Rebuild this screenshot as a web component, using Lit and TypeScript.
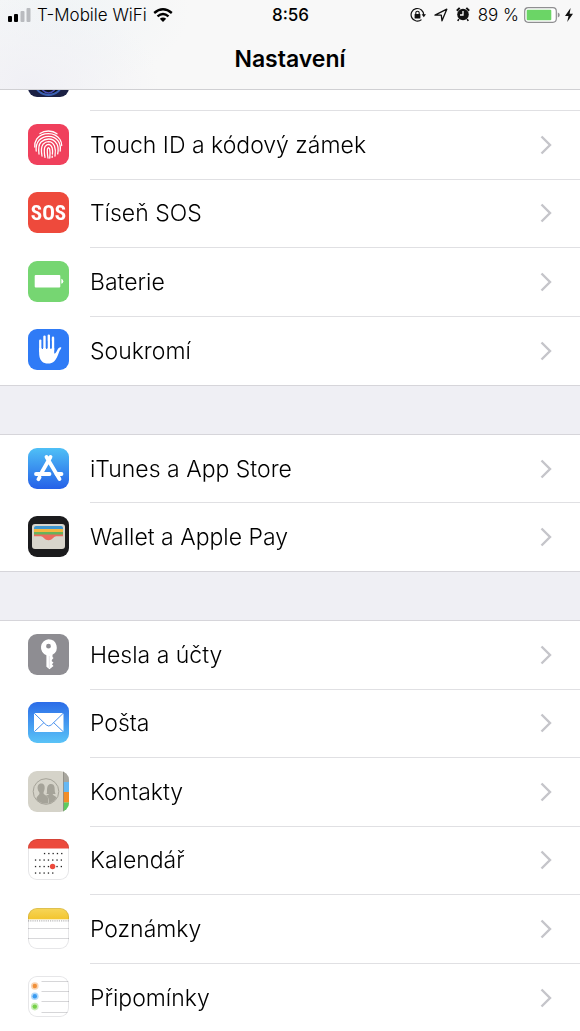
import { LitElement, html, css, svg, TemplateResult } from "lit";
import { customElement } from "lit/decorators.js";
import { unsafeCSS } from "lit";

interface Item {
  label: string;
  icon: TemplateResult;
}

const fan = (n: number, f: (i: number) => TemplateResult) =>
  Array.from({ length: n }, (_, i) => f(i));

// Every icon is drawn in a 41 x 41 box; the tile clips the corners.
const faceIcon = svg`
  <rect width="41" height="41" fill="#1b2044" />
  <ellipse cx="20.5" cy="28" rx="13" ry="11" fill="#10131f" stroke="#3a5fb0" stroke-width="2" />
  <ellipse cx="20.5" cy="28" rx="8" ry="9" fill="none" stroke="#4a4fb8" stroke-width="1.5" />`;

const touchIcon = svg`
  <rect width="41" height="41" fill="#f0405c" />
  <g fill="none" stroke="#fff" stroke-width="1.3" stroke-linecap="round">
    <path d="M12 9.500Q15.500 7 20.500 7Q25.500 7 29 9.800" />
    <path d="M6.800 23Q6.300 18.500 8.800 14.800Q13 9.600 20.500 9.600Q28 9.600 32 15.500Q33.800 18.500 33.700 21.500" />
    <path d="M8.200 27Q7.500 20.500 11 16.300Q15 12.300 20.500 12.300Q27 12.300 30.500 17.300Q33 21.500 32.200 27" />
    <path d="M11 30Q9.800 21.500 13 18Q16.500 15 20.500 15Q26 15 28.800 19.800Q31 24 29.700 29.800" />
    <path d="M14 32Q12.500 23.500 15 20.300Q17.500 17.700 20.500 17.700Q24.500 17.800 26.500 22Q28 26 27 32" />
    <path d="M17 33.300Q15.500 25 17.200 22.300Q18.800 20.400 20.500 20.400Q23 20.600 24.200 24Q25 27.500 24.400 30" />
    <path d="M20 34Q18.800 27 19.600 24.500Q20.800 22.800 21.700 25Q22.400 29 21.800 34M24.300 32.200L24.100 33.400" />
  </g>`;

const sosIcon = svg`
  <rect width="41" height="41" fill="#ee4a3c" />
  <text class="sos" x="20.500" y="27.800" text-anchor="middle">SOS</text>`;

const batteryIcon = svg`
  <rect width="41" height="41" fill="#76d672" />
  <rect x="6.700" y="14" width="25.600" height="12.600" rx="1" fill="#fff" />
  <path d="M33.300 17.800Q35.300 18.300 35.300 20.300T33.300 22.800Z" fill="#fff" />`;

const handIcon = svg`
  <rect width="41" height="41" fill="#2f7bf6" />
  <g stroke="#fff" stroke-width="2.400" stroke-linecap="round" fill="none">
    <path d="M12.300 22V11.800M16.500 20V7.600M20.800 20V6.600M25 21V8.800" />
  </g>
  <path d="M11.100 19H26.200V24.500C27.700 24.800 28.500 22.500 29.600 20.500C30.800 18.300 33 17.900 33.300 18.800C33.300 19.800 31.900 20.700 31 23.300C29.600 27.500 28.300 30 26.300 32.300C23.500 35.200 17 35.500 14 32.500C11.500 30 11.100 27 11.100 23Z" fill="#fff" />
  <path d="M14.400 12V20M18.700 12V20M22.900 12V20" stroke="#2f7bf6" stroke-width="1.200" />`;

const storeIcon = svg`
  <defs>
    <linearGradient id="store" x2="0" y2="1">
      <stop stop-color="#4fc0f6" /><stop offset="1" stop-color="#2560e8" />
    </linearGradient>
  </defs>
  <rect width="41" height="41" fill="url(#store)" />
  <g stroke="#fff" stroke-width="3.800" stroke-linecap="round" fill="none">
    <path d="M22.500 9L13.800 24.300M18.500 9L31.500 31M11.600 29.300L10.400 31.200" />
    <path d="M8 26H21.500M28.500 26H33.500" />
  </g>`;

const walletIcon = svg`
  <rect width="41" height="41" fill="#1b1b1d" />
  <rect x="4" y="8" width="33" height="25" rx="3" fill="#d8d5cc" />
  <rect x="6" y="10" width="29" height="9" rx="2" fill="#3f97cf" />
  <path d="M6 13H35V20H6Z" fill="#f4b63f" />
  <path d="M6 16H35V21H6Z" fill="#67b35c" />
  <path d="M6 18.500H35V21H6Z" fill="#ec6b5d" />
  <path d="M5 20.300H36V30Q36 32 34 32H7Q5 32 5 30Z" fill="#d8d5cc" />
  <path d="M12.500 20H28.500C25.500 20.300 24.500 24.300 20.500 24.300S15.500 20.300 12.500 20Z" fill="#ec6b5d" />`;

const keyIcon = svg`
  <rect width="41" height="41" fill="#8e8d92" />
  <path fill-rule="evenodd" fill="#fff" d="M20.500 5.300A8.200 8.200 0 0 1 24.500 20.700V23L25.500 24L23.800 26V27.300L25.500 28.600L24 30.200L25.500 32L21.500 35.300L18.400 32.800V21.200A8.200 8.200 0 0 1 20.500 5.300ZM20.500 9.800A2.400 2.400 0 1 0 20.500 14.600A2.400 2.400 0 1 0 20.500 9.800Z" />
  <path d="M21.300 22V34" stroke="#d5d4d8" stroke-width=".600" />`;

const mailIcon = svg`
  <defs>
    <linearGradient id="mail" x2="0" y2="1">
      <stop stop-color="#2b6ce8" /><stop offset="1" stop-color="#5ac3f7" />
    </linearGradient>
  </defs>
  <rect width="41" height="41" fill="url(#mail)" />
  <rect x="6" y="11" width="29.500" height="19" rx="1.500" fill="#fff" />
  <g fill="none" stroke="#4b92ee" stroke-width="1">
    <path d="M6.500 11.500L18.300 23Q20.700 25 23.200 23L35 11.500" />
    <path d="M6.500 29.500L16 20.500M35 29.500L25.500 20.500" />
  </g>`;

const contactsIcon = svg`
  <rect width="41" height="41" fill="#d5d3c9" />
  <rect x="35" width="6" height="11" fill="#a8a69e" />
  <rect x="35" y="11" width="6" height="10" fill="#66b8f4" />
  <rect x="35" y="21" width="6" height="10.500" fill="#f38d27" />
  <rect x="35" y="31.500" width="6" height="9.500" fill="#5ccb5f" />
  <path d="M35.500 0V41" stroke="#8d8b84" stroke-width=".800" />
  <circle cx="18" cy="20.500" r="12.800" fill="none" stroke="#a5a399" stroke-width="1" />
  <path fill="#a5a399" d="M13.200 12.500C16.300 12.500 17 15 16.600 18C16.300 20 15.500 20.700 15.500 22.200C15.500 24 19.500 24.200 20.300 27.500V32Q14 34 8.500 28.500C8 25.500 11.500 24.300 11.500 22.200C11.500 20.700 10 20.300 9.700 18C9.300 15 10.200 12.500 13.200 12.500Z" />
  <path fill="#a5a399" d="M23 13C26.500 13 26.800 16.500 26.700 19C26.600 21 27.500 22 27.500 23H24.700C24.700 24.500 27.500 24.700 28.500 26.500Q25.500 31.500 20.800 32.300C21.500 28 20 25.500 17.700 24.300C19.500 24.300 20.800 24 21 23H18.300C19.300 22 18.800 20.500 19 18.500C19.200 15.500 20 13 23 13Z" />`;

const dotRows: [number, number, number][] = [
  [14.5, 16.5, 5],
  [21, 7.5, 7],
  [27.5, 7.5, 7],
  [34, 7.5, 5],
];
const calendarIcon = svg`
  <rect width="41" height="41" fill="#fff" />
  <rect width="41" height="9.500" fill="#ec4a3c" />
  <g fill="#222">
    ${dotRows.map(([y, x, n]) =>
      fan(n, (i) => svg`<rect x=${x + i * 4.3 - 0.6} y=${y - 0.6} width="1.300" height="1.300" />`)
    )}
  </g>
  <circle cx="24.600" cy="27.500" r="2.700" fill="#ec4a3c" />`;

const notesIcon = svg`
  <defs>
    <linearGradient id="notes" x2="0" y2="1">
      <stop stop-color="#f7d65a" /><stop offset="1" stop-color="#f2c52f" />
    </linearGradient>
  </defs>
  <rect width="41" height="41" fill="#fff" />
  <rect width="41" height="11.300" fill="url(#notes)" />
  <path d="M0 12.800H41" stroke="#b8b8b8" stroke-width="1.200" stroke-dasharray="1.200 1" />
  <path d="M0 20.500H41M0 30.500H41" stroke="#d8d8da" stroke-width="1" />`;

const remindersIcon = svg`
  <rect width="41" height="41" fill="#fff" />
  <path d="M13.500 5.500H41M13.500 15.500H41M13.500 25.500H41M13.500 36.500H41" stroke="#d6d6d8" stroke-width="1" />
  ${["#f0903a", "#3a9bf0", "#76d047"].map(
    (c, i) => svg`
      <circle cx="6.800" cy=${10 + i * 10.3} r="3.800" fill=${c} opacity=".400" />
      <circle cx="6.800" cy=${10 + i * 10.3} r="2.200" fill=${c} />`
  )}`;

const groups: { name: string; items: Item[] }[] = [
  {
    name: "five",
    items: [
      { label: "Siri a hledání", icon: faceIcon },
      { label: "Touch ID a kódový zámek", icon: touchIcon },
      { label: "Tíseň SOS", icon: sosIcon },
      { label: "Baterie", icon: batteryIcon },
      { label: "Soukromí", icon: handIcon },
    ],
  },
  {
    name: "two",
    items: [
      { label: "iTunes a App Store", icon: storeIcon },
      { label: "Wallet a Apple Pay", icon: walletIcon },
    ],
  },
  {
    name: "six",
    items: [
      { label: "Hesla a účty", icon: keyIcon },
      { label: "Pošta", icon: mailIcon },
      { label: "Kontakty", icon: contactsIcon },
      { label: "Kalendář", icon: calendarIcon },
      { label: "Poznámky", icon: notesIcon },
      { label: "Připomínky", icon: remindersIcon },
    ],
  },
];
const outlined = new Set(["Kalendář", "Poznámky", "Připomínky"]);

const fontStack = unsafeCSS(`Inter, Roboto, "Liberation Sans", sans-serif`);

@customElement("status-bar")
class StatusBar extends LitElement {
  static styles = css`
    :host {
      display: grid;
      grid-template-columns: 1fr auto 1fr;
      align-items: center;
      height: 29px;
      padding: 0 7px 0 8px;
      font: 300 17px/20px ${fontStack};
      color: #000;
    }
    svg { display: block; flex: none; }
    .left { display: flex; align-items: center; gap: 6px; }
    .time { font-weight: 500; }
    .right { display: flex; align-items: center; justify-content: flex-end; gap: 5px; }
    .glyphs { display: flex; align-items: center; gap: 8px; margin-right: 3px; }
  `;

  render() {
    return html`
      <div class="left">
        <svg width="23" height="14" viewBox="0 0 23 14" aria-hidden="true">
          <rect x="0" y="8" width="4" height="6" rx="1" fill="#000" />
          <rect x="6" y="6" width="4" height="8" rx="1" fill="#000" />
          <rect x="12.500" y="3" width="4" height="11" rx="1" fill="#b9bbbf" />
          <rect x="18.500" y="0" width="4" height="14" rx="1" fill="#b9bbbf" />
        </svg>
        <span>T-Mobile WiFi</span>
        <svg width="20" height="14" viewBox="0 0 20 14" aria-hidden="true">
          <g fill="none" stroke="#000" stroke-width="2.400">
            <path d="M1.200 5Q10-2.500 18.800 5" />
            <path d="M4.500 8.400Q10 3.700 15.500 8.400" />
          </g>
          <path d="M10 14L6.800 10.800Q10 8 13.200 10.800Z" fill="#000" />
        </svg>
      </div>
      <span class="time">8:56</span>
      <div class="right">
        <div class="glyphs">
          <svg width="16" height="16" viewBox="0 0 16 16" aria-hidden="true">
            <path d="M13.700 8A6.300 6.300 0 1 0 11.500 12.600" fill="none" stroke="#111" stroke-width="1.200" />
            <path d="M11.600 7.300H16L13.800 10.300Z" fill="#111" />
            <rect x="4.600" y="7" width="5.800" height="4.400" rx=".500" fill="#111" />
            <path d="M5.800 7V5.800Q5.800 4.200 7.500 4.200T9.200 5.800V7" fill="none" stroke="#111" stroke-width="1.100" />
          </svg>
          <svg width="14" height="14" viewBox="0 0 14 14" aria-hidden="true">
            <path d="M1 7.200L12.800 1.200L8 12.800L7.300 7.200Z" fill="none" stroke="#111" stroke-width="1.300" stroke-linejoin="round" />
          </svg>
          <svg width="14" height="15" viewBox="0 0 14 15" aria-hidden="true">
            <circle cx="7" cy="7.500" r="5.800" fill="#111" />
            <path d="M.800 3.700L3.700.900M13.200 3.700L10.300.900" stroke="#111" stroke-width="2" />
            <path d="M2.800 12L1.800 14M11.200 12L12.200 14" stroke="#111" stroke-width="1.600" />
            <path d="M7 4V8H4" fill="none" stroke="#fff" stroke-width="1.300" />
          </svg>
        </div>
        <span>89 %</span>
        <svg width="36" height="16" viewBox="0 0 36 16" aria-label="Baterie 89 %">
          <rect x=".700" y=".700" width="31.600" height="14.600" rx="3.500" fill="#fff" stroke="#8f8f91" stroke-width="1.200" />
          <rect x="2.700" y="2.700" width="24.600" height="10.600" rx="1" fill="#6bd566" />
          <path d="M33.800 5.500Q35.800 6.200 35.800 8T33.800 10.500Z" fill="#8f8f91" />
        </svg>
        <svg width="8" height="14" viewBox="0 0 8 14" aria-hidden="true">
          <path d="M5.600 0L0 8H3.500L2.200 14L8 5.700H4.600Z" fill="#111" />
        </svg>
      </div>
    `;
  }
}

@customElement("settings-group")
class SettingsGroup extends LitElement {
  static properties = { items: { attribute: false }, size: {} };
  declare items: Item[];
  declare size: string;

  static styles = css`
    :host { display: block; }
    .list {
      display: grid;
      grid-auto-rows: 1fr;
      box-sizing: border-box;
      margin: 0;
      padding: 0;
      list-style: none;
      background: #fff;
      border-bottom: 1px solid #d6d5da;
    }
    .five { min-height: 343px; }
    .two, .six { border-top: 1px solid #d6d5da; }
    .two { min-height: 138px; }
    .six { min-height: 413px; }
    .row {
      display: flex;
      align-items: stretch;
      box-sizing: border-box;
      height: 100%;
      padding-left: 28px;
      gap: 21px;
      color: #000;
      text-decoration: none;
    }
    .tile {
      flex: none;
      align-self: center;
      width: 41px;
      height: 41px;
      margin-bottom: 2px;
      border-radius: 9px;
      overflow: hidden;
    }
    .outlined { box-shadow: inset 0 0 0 1px #e6e6e8; }
    .outlined svg { mix-blend-mode: multiply; }
    .tile svg { display: block; }
    .sos { font: 700 21px "Liberation Sans Narrow", "Roboto Condensed", Roboto, sans-serif; fill: #fff; }
    .body {
      display: flex;
      flex: 1;
      align-items: center;
      justify-content: space-between;
      padding-right: 28px;
      border-bottom: 1px solid #e0e0e3;
      font: 300 23px/30px ${fontStack};
    }
    li:last-child .body { border-bottom: 0; }
    .chevron { flex: none; }
  `;

  render() {
    return html`
      <ul class="list ${this.size}">
        ${this.items.map(
          (item) => html`
            <li>
              <a class="row" href="#">
                <span class="tile ${outlined.has(item.label) ? "outlined" : ""}">
                  <svg width="41" height="41" viewBox="0 0 41 41" aria-hidden="true">${item.icon}</svg>
                </span>
                <span class="body">
                  <span>${item.label}</span>
                  <svg class="chevron" width="12" height="20" viewBox="0 0 12 20" aria-hidden="true">
                    <path d="M1.500 1.500L10 10L1.500 18.500" fill="none" stroke="#c5c5ca" stroke-width="2.400" />
                  </svg>
                </span>
              </a>
            </li>
          `
        )}
      </ul>
    `;
  }
}

@customElement("app-root")
class AppRoot extends LitElement {
  static styles = css`
    :host {
      display: block;
      height: 100vh;
      overflow: hidden;
      background: #efeff4;
      font-family: ${fontStack};
    }
    .bar {
      position: fixed;
      inset: 0 0 auto 0;
      z-index: 1;
      box-sizing: border-box;
      height: 90px;
      border-bottom: 1px solid #d0d0d3;
      background:
        radial-gradient(ellipse 130px 90px at 30px 85px, #f0f0f5, transparent),
        radial-gradient(ellipse 130px 80px at 60px 10px, #f0f4f6, transparent),
        #f8f8f8;
    }
    .title {
      margin: 0;
      padding-top: 15px;
      text-align: center;
      font: 600 23px/30px ${fontStack};
      color: #000;
    }
    .content {
      display: flex;
      flex-direction: column;
      gap: 48px;
      padding-top: 43px;
    }
  `;

  render() {
    return html`
      <header class="bar">
        <status-bar></status-bar>
        <h1 class="title">Nastavení</h1>
      </header>
      <main class="content">
        ${groups.map((g) => html`<settings-group .items=${g.items} .size=${g.name}></settings-group>`)}
      </main>
    `;
  }
}
